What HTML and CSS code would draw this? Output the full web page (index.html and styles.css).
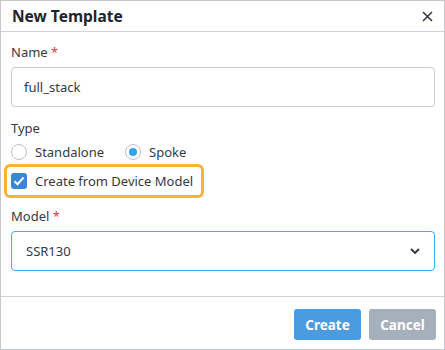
FILE: index.html
```html
<!DOCTYPE html>
<html>
    <head>
        <title>New Template</title>
        <link rel="stylesheet" href="styles.css">
    </head>
    <body>
        <div class="dialog">
            <div class="header">
                <h1>New Template</h1>
                <button class="close" aria-label="Close">
                    <svg width="11" height="11" viewBox="0 0 11 11"><path d="M1 1L10 10M10 1L1 10" stroke="#2d3540" stroke-width="1.5" fill="none"/></svg>
                </button>
            </div>
            <div class="content">
                <label class="field-label">Name <span class="req">*</span></label>
                <div class="input">full_stack</div>

                <label class="field-label type-label">Type</label>
                <div class="radios">
                    <span class="option"><span class="radio"></span>Standalone</span>
                    <span class="option"><span class="radio checked"></span>Spoke</span>
                </div>

                <div class="highlight">
                    <span class="checkbox">
                        <svg width="12" height="10" viewBox="0 0 12 10"><path d="M1.5 5.2L4.5 8.2L10.5 1.5" stroke="#fff" stroke-width="2" fill="none"/></svg>
                    </span>
                    Create from Device Model
                </div>

                <label class="field-label model-label">Model <span class="req">*</span></label>
                <div class="select">
                    <span>SSR130</span>
                    <svg width="10" height="6" viewBox="0 0 10 6"><path d="M1 1L5 5L9 1" stroke="#2d3540" stroke-width="1.8" fill="none"/></svg>
                </div>
            </div>
            <div class="footer">
                <button class="btn primary">Create</button>
                <button class="btn disabled">Cancel</button>
            </div>
        </div>
    </body>
</html>
```

FILE: styles.css
```css
body {
    margin: 0;
    font-family: "Noto Sans", "Open Sans", sans-serif;
    color: #333a44;
    background-color: #fff;
}
.dialog {
    width: 445px;
    height: 350px;
    box-sizing: border-box;
    border: 1px solid #c4c8cc;
    display: flex;
    flex-direction: column;
}
.header {
    height: 30px;
    display: flex;
    align-items: center;
    justify-content: space-between;
    padding: 0 11px 0 11px;
    border-bottom: 1px solid #cdd3da;
}
h1 {
    margin: 0;
    font-size: 15.5px;
    font-weight: bold;
    color: #1e2430;
}
.close {
    border: none;
    background: none;
    padding: 0;
    display: flex;
}
.content {
    flex: 1;
    padding: 11px 9px 0 10px;
    display: flex;
    flex-direction: column;
    align-items: flex-start;
}
.field-label {
    font-size: 13px;
    line-height: 18px;
    margin-bottom: 6px;
}
.req {
    color: #e5393f;
}
.input, .select {
    align-self: stretch;
    height: 40px;
    box-sizing: border-box;
    border: 1px solid #c5ccd4;
    border-radius: 4px;
    display: flex;
    align-items: center;
    padding: 0 12px;
    font-size: 13px;
}
.type-label {
    margin-top: 12px;
    margin-bottom: 6px;
}
.radios {
    display: flex;
    gap: 21px;
    font-size: 13px;
    line-height: 18px;
}
.option {
    display: flex;
    align-items: center;
    gap: 8px;
}
.radio {
    width: 16px;
    height: 16px;
    border: 1px solid #b9c1ca;
    border-radius: 50%;
    box-sizing: border-box;
    display: flex;
    align-items: center;
    justify-content: center;
}
.radio.checked::after {
    content: "";
    width: 8px;
    height: 8px;
    border-radius: 50%;
    background-color: #2aa7ef;
}
.highlight {
    margin: 3px 0 0 -7px;
    border: 3px solid #f7b334;
    border-radius: 6px;
    padding: 4px 8px 4px 4px;
    display: flex;
    align-items: center;
    gap: 8px;
    font-size: 13px;
    line-height: 20px;
}
.checkbox {
    width: 16px;
    height: 16px;
    border-radius: 3px;
    background-color: #3a86d6;
    display: flex;
    align-items: center;
    justify-content: center;
}
.model-label {
    margin-top: 9px;
}
.select {
    border-color: #36b0ec;
    justify-content: space-between;
    padding: 0 14px 0 14px;
}
.footer {
    height: 53px;
    box-sizing: border-box;
    border-top: 1px solid #cdd3da;
    display: flex;
    justify-content: flex-end;
    align-items: flex-start;
    gap: 8px;
    padding: 12px 8px 0 0;
}
.btn {
    width: 67px;
    height: 31px;
    border: none;
    border-radius: 3px;
    font-family: inherit;
    font-size: 13.5px;
    font-weight: bold;
    color: #fff;
}
.primary {
    background-color: #4a9be0;
}
.disabled {
    background-color: #a6afbc;
}
```
